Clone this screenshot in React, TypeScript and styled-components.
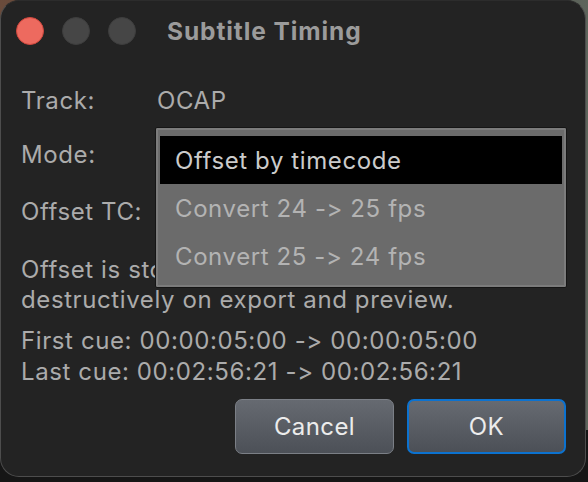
import { FC } from "react";
import styled, { createGlobalStyle } from "styled-components";

const GlobalStyle = createGlobalStyle`
  html, body {
    margin: 0;
    padding: 0;
    width: 588px;
    height: 482px;
    overflow: hidden;
    background: linear-gradient(90deg, #6a4b3b 0%, #3a3a36 60%, #5e655c 100%);
  }
  body {
    font-family: Inter, "Open Sans", "Liberation Sans", sans-serif;
    font-feature-settings: "calt" 0, "liga" 0;
  }
`;

const Backdrop = styled.div`
  width: 588px;
  height: 482px;
  background: linear-gradient(180deg, transparent 0, transparent 430px, #161616 430px);
`;

const Window = styled.div`
  position: relative;
  width: 586px;
  height: 477px;
  box-sizing: border-box;
  background: #232323;
  border: 1px solid #4d4d4d;
  border-top-color: #2c2c2c;
  border-radius: 19px;
  display: flex;
  flex-direction: column;
  color: #ababab;
  font-size: 24px;
  letter-spacing: 0.6px;
`;

const TitleBar = styled.div`
  height: 60px;
  display: flex;
  align-items: center;
  padding-left: 15px;
  gap: 18px;
`;

const Lights = styled.div`
  display: flex;
  gap: 18px;
`;

const Light = styled.span<{ color: string; edge: string }>`
  width: 28px;
  height: 28px;
  border-radius: 50%;
  box-sizing: border-box;
  background: ${({ color }) => color};
  border: 1px solid ${({ edge }) => edge};
`;

const Title = styled.div`
  margin-left: 13px;
  font-weight: 700;
  font-size: 24.5px;
  color: #9b9b9b;
  letter-spacing: 0.9px;
`;

const Content = styled.div`
  flex: 1;
  display: flex;
  flex-direction: column;
  padding: 12px 19px 0 20px;
`;

const Form = styled.div`
  display: grid;
  grid-template-columns: 136px 1fr;
  grid-auto-rows: auto;
  align-items: center;
`;

const Label = styled.div<{ h: number }>`
  height: ${({ h }) => h}px;
  display: flex;
  align-items: center;
`;

const Value = styled.div`
  color: #ababab;
`;

const PopupButton = styled.div`
  width: 200px;
  height: 34px;
  border-radius: 6px;
  background: #555;
`;

const Field = styled.div`
  width: 160px;
  height: 36px;
  background: #2e2e2e;
  border: 1px solid #444;
`;

const Note = styled.p`
  margin: 14px 0 0;
  line-height: 30px;
`;

const Cues = styled.div`
  margin-top: 10px;
  line-height: 31px;
`;

const Buttons = styled.div`
  margin-top: 12px;
  display: flex;
  justify-content: flex-end;
  gap: 13px;
`;

const Button = styled.button<{ primary?: boolean }>`
  width: 159px;
  height: 55px;
  box-sizing: border-box;
  border-radius: 7px;
  font-family: inherit;
  font-feature-settings: inherit;
  font-size: 24px;
  letter-spacing: 0.4px;
  color: #ececec;
  background: linear-gradient(180deg, #666a71 0%, #4c5057 100%);
  border: ${({ primary }) => (primary ? "2px solid #0c72cf" : "1px solid #7b7f86")};
  padding: 0;
`;

const Menu = styled.div`
  position: absolute;
  left: 154px;
  top: 126px;
  width: 412px;
  height: 161px;
  box-sizing: border-box;
  background: #6b6b6b;
  border: 1px solid #151515;
  box-shadow: inset 0 0 0 2px #7c7c7c;
  border-radius: 2px;
  padding: 8px 4px 6px;
  display: flex;
  flex-direction: column;
`;

const MenuItem = styled.div<{ selected?: boolean }>`
  height: 49px;
  display: flex;
  align-items: center;
  padding-left: 15px;
  background: ${({ selected }) => (selected ? "#000" : "transparent")};
  color: ${({ selected }) => (selected ? "#cbcbcb" : "#b3b3b3")};
`;

const App: FC = () => {
  return (
    <Backdrop>
      <GlobalStyle />
      <Window>
        <TitleBar>
          <Lights>
            <Light color="#ed6a5f" edge="#d0473d" />
            <Light color="#464646" edge="#3e3e3e" />
            <Light color="#464646" edge="#3e3e3e" />
          </Lights>
          <Title>Subtitle Timing</Title>
        </TitleBar>
        <Content>
          <Form>
            <Label h={54}>Track:</Label>
            <Value>OCAP</Value>
            <Label h={54}>Mode:</Label>
            <PopupButton />
            <Label h={60}>Offset TC:</Label>
            <Field />
          </Form>
          <Note>
            Offset is stored and applied non-
            <br />
            destructively on export and preview.
          </Note>
          <Cues>
            First cue: 00:00:05:00 -&gt; 00:00:05:00
            <br />
            Last cue: 00:02:56:21 -&gt; 00:02:56:21
          </Cues>
          <Buttons>
            <Button>Cancel</Button>
            <Button primary>OK</Button>
          </Buttons>
        </Content>
        <Menu>
          <MenuItem selected>Offset by timecode</MenuItem>
          <MenuItem>Convert 24 -&gt; 25 fps</MenuItem>
          <MenuItem>Convert 25 -&gt; 24 fps</MenuItem>
        </Menu>
      </Window>
    </Backdrop>
  );
};

export default App;
